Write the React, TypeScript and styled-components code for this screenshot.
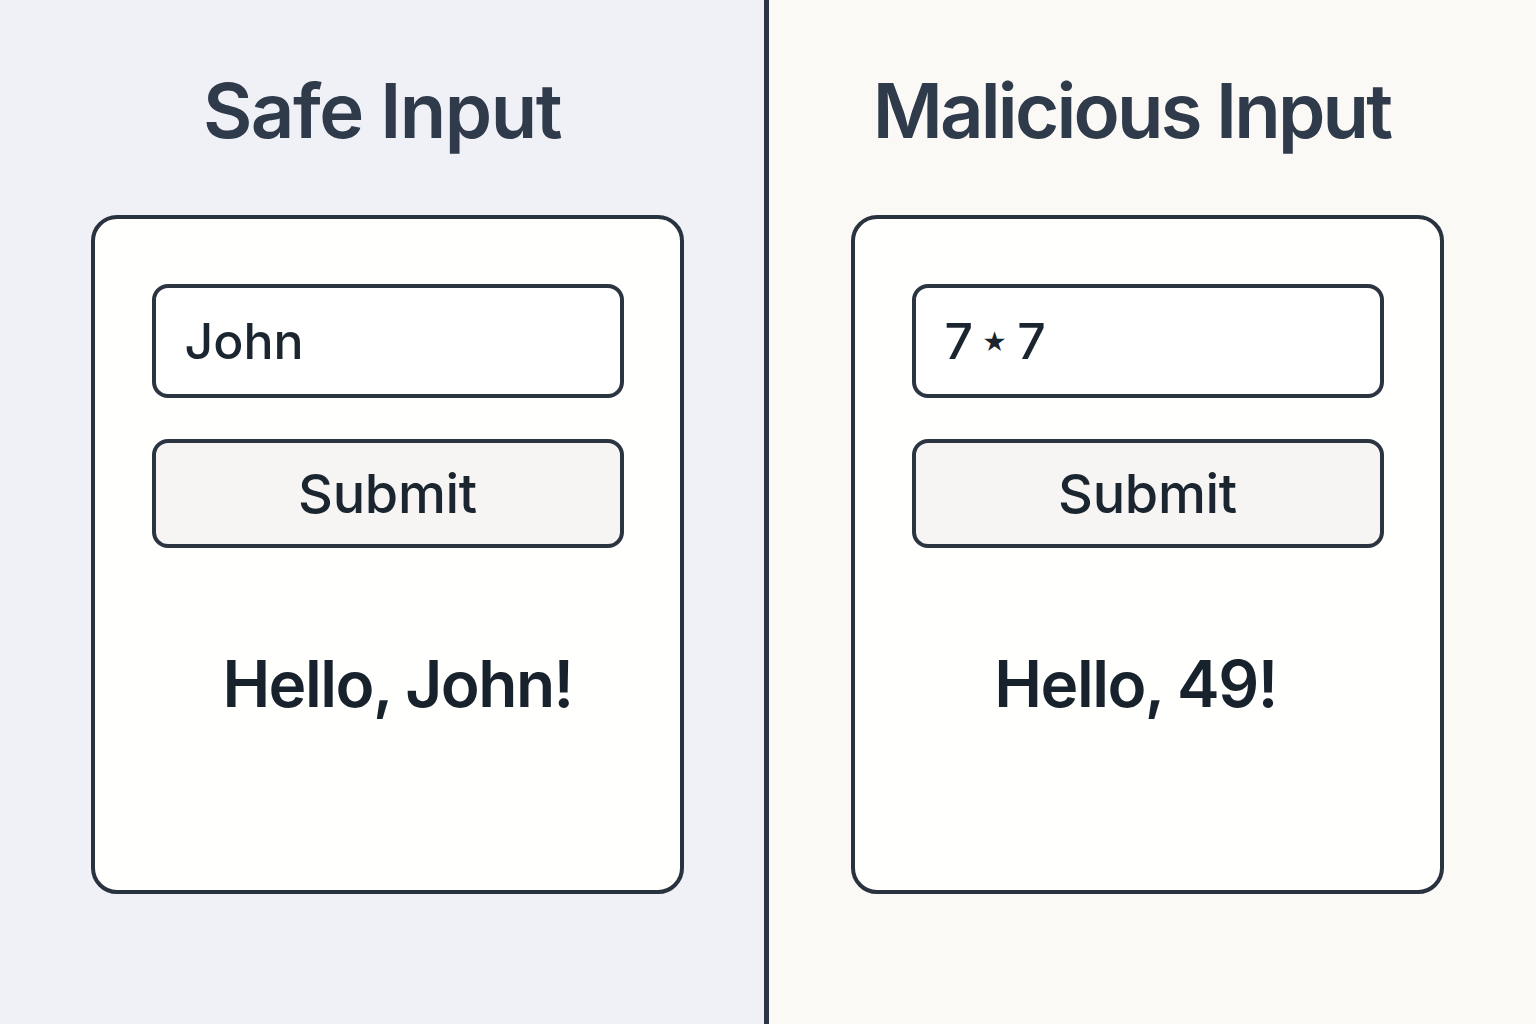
import React from "react";
import styled, { createGlobalStyle } from "styled-components";

const Global = createGlobalStyle`
  html, body { margin: 0; padding: 0; }
  body { font-family: Inter, "Noto Sans", "Liberation Sans", sans-serif; }
  #root { width: 1536px; height: 1024px; }
`;

const Page = styled.div`
  display: flex;
  width: 1536px;
  height: 1024px;
  overflow: hidden;
`;

const Panel = styled.section<{ $side: "left" | "right" }>`
  flex: ${(p) => (p.$side === "left" ? "0 0 764px" : "1 1 auto")};
  background: ${(p) => (p.$side === "left" ? "#eff1f6" : "#faf9f6")};
  display: flex;
  flex-direction: column;
  align-items: center;
  padding-top: 72px;
  box-sizing: border-box;
`;

const Divider = styled.div`
  flex: 0 0 5px;
  background: #2b3544;
`;

const Title = styled.h1<{ $shift: number; $tracking: number }>`
  margin: 0 0 0 ${(p) => p.$shift}px;
  font-size: 76px;
  line-height: 76px;
  font-weight: 600;
  color: #2f3a4a;
  letter-spacing: ${(p) => p.$tracking}px;
  white-space: nowrap;
`;

const Card = styled.div<{ $shift: number }>`
  margin: 67px 0 0 ${(p) => p.$shift}px;
  width: 593px;
  height: 679px;
  box-sizing: border-box;
  border: 4px solid #29323f;
  border-radius: 26px;
  background: #fffffe;
  padding: 65px 56px 0 57px;
  display: flex;
  flex-direction: column;
  gap: 41px;
`;

const Field = styled.div`
  height: 114px;
  box-sizing: border-box;
  border: 4px solid #2b3441;
  border-radius: 16px;
  background: #ffffff;
  display: flex;
  align-items: center;
  padding-left: 29px;
  font-size: 50px;
  font-weight: 500;
  color: #1b2530;
`;

const Star = styled.span`
  font-size: 24px;
  margin: 0 10px 0 9px;
  position: relative;
  top: 1px;
`;

const Button = styled.div`
  height: 109px;
  box-sizing: border-box;
  border: 4px solid #2b3441;
  border-radius: 16px;
  background: #f6f5f3;
  display: flex;
  align-items: center;
  justify-content: center;
  font-size: 54px;
  font-weight: 500;
  color: #1b2530;
  letter-spacing: -0.3px;
`;

const Greeting = styled.div<{ $shift: number }>`
  margin: 63px 0 0 ${(p) => p.$shift}px;
  text-align: center;
  font-size: 64px;
  line-height: 1;
  font-weight: 600;
  color: #18222d;
  letter-spacing: -1.5px;
  white-space: nowrap;
`;

export default function App() {
  return (
    <>
      <Global />
      <Page>
        <Panel $side="left">
          <Title $shift={0} $tracking={-1.5}>
            Safe Input
          </Title>
          <Card $shift={10}>
            <Field>John</Field>
            <Button>Submit</Button>
            <Greeting $shift={20}>Hello, John!</Greeting>
          </Card>
        </Panel>
        <Divider />
        <Panel $side="right">
          <Title $shift={-42} $tracking={-2.8}>
            Malicious Input
          </Title>
          <Card $shift={-11}>
            <Field>
              7<Star>★</Star>7
            </Field>
            <Button>Submit</Button>
            <Greeting $shift={-24}>Hello, 49!</Greeting>
          </Card>
        </Panel>
      </Page>
    </>
  );
}
